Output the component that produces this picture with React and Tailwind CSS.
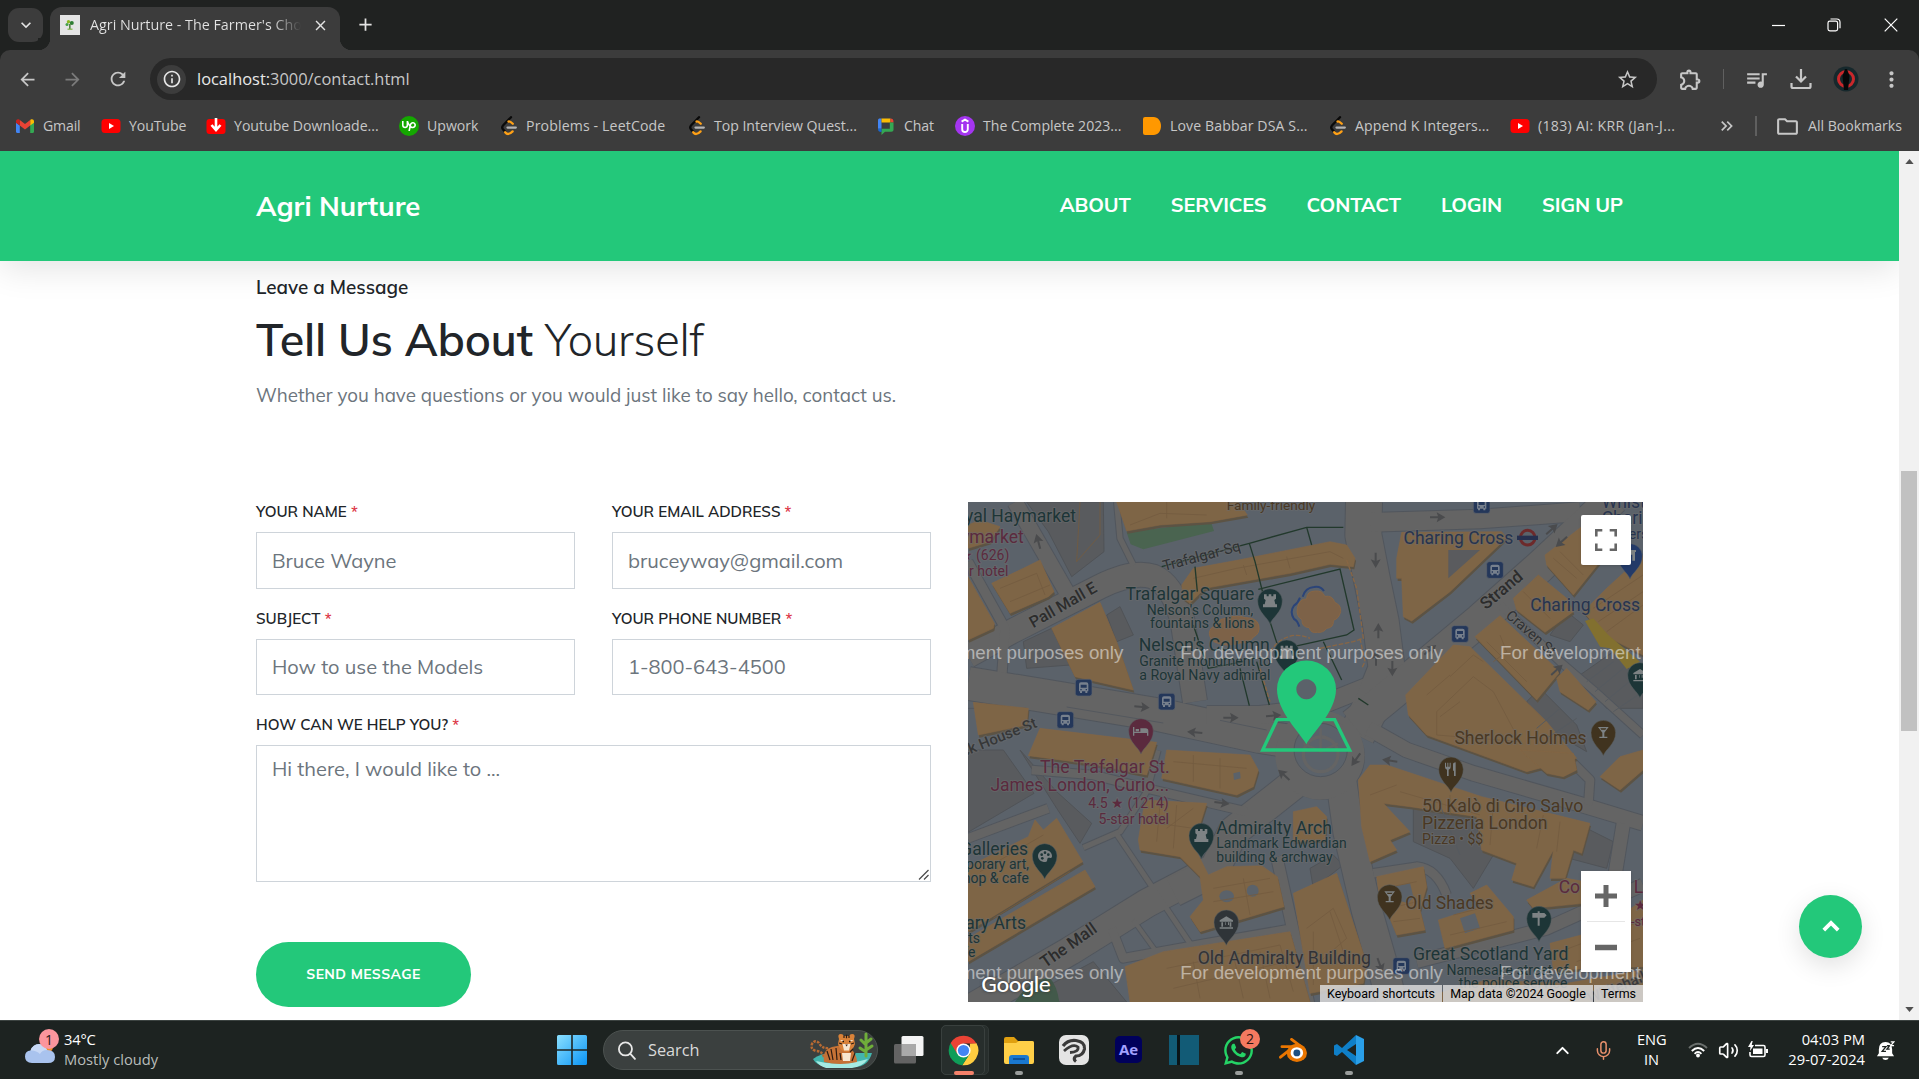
import React from 'react';
import {
  MdArrowBack, MdArrowForward, MdRefresh, MdStarBorder, MdOutlineExtension, MdQueueMusic,
  MdMoreVert, MdClose, MdAdd, MdOutlineFolder, MdKeyboardArrowDown,
  MdKeyboardDoubleArrowRight, MdInfoOutline,
} from 'react-icons/md';
import { SiUpwork } from 'react-icons/si';
import { FaWhatsapp } from 'react-icons/fa';
import { ChevronUp, Mic, Volume2 } from 'lucide-react';

const ui = "font-['Open_Sans','Noto_Sans',sans-serif]";
const site = "font-['Mulish','Open_Sans',sans-serif]";

/* ---------- bookmark icons ---------- */
const GmailIcon = () => (
  <svg viewBox="0 0 20 20" className="size-5">
    <path d="M1 5.5v10.2c0 .7.5 1.2 1.2 1.2h2.6V9.6L1 6.8z" fill="#4285f4" />
    <path d="M15.2 16.900h2.600c.7 0 1.200-.5 1.200-1.200V5.500l-3.800 3z" fill="#34a853" />
    <path d="M15.200 4v5.600L19 6.800V5.200c0-1.900-2-2.600-3.200-1.600z" fill="#fbbc04" />
    <path d="M4.800 9.600V4L10 8l5.200-4v5.600L10 13.600z" fill="#ea4335" />
    <path d="M1 5.200v1.600l3.800 2.800V4l-.6-.4C2.900 2.700 1 3.300 1 5.200z" fill="#c5221f" />
  </svg>
);
const YoutubeIcon = () => (
  <svg viewBox="0 0 20 20" className="size-5">
    <rect x="0.500" y="3" width="19" height="14" rx="3.500" fill="#f00" />
    <path d="M8 7v6l5-3z" fill="#fff" />
  </svg>
);
const DownloaderIcon = () => (
  <svg viewBox="0 0 20 20" className="size-5">
    <rect x="0.500" y="3" width="19" height="15" rx="3" fill="#f00" />
    <path d="M10 2v11M5.500 9l4.500 5 4.500-5" fill="none" stroke="#fff" strokeWidth="2.600" />
  </svg>
);
const UpworkIcon = () => (
  <span className="flex size-5 items-center justify-center rounded-full bg-[#14a800] text-white">
    <SiUpwork size={14} />
  </span>
);
const LeetIcon = () => (
  <svg viewBox="0 0 20 20" className="size-5" fill="none" strokeWidth="2.300" strokeLinecap="round">
    <path d="M13 1.200 5.200 9.300c-1.200 1.300-1.200 3 0 4.300l2 2.200" stroke="#0a0a0a" />
    <path d="M10.500 5.500c1-.6 2 0 4.300 2.300" stroke="#ffa116" />
    <path d="M7.200 16.200c1.800 2.400 4 2.600 7.400-.8" stroke="#ffa116" />
    <path d="M9.500 11.600h8.300" stroke="#b3b3b3" />
  </svg>
);
const ChatIcon = () => (
  <svg viewBox="0 0 20 20" className="size-5">
    <path d="M2 4.500C2 3.100 2.700 2.500 4 2.500h1.500v10.200H2z" fill="#4285f4" />
    <path d="M5.500 2.500h9v4h-9z" fill="#fbbc04" />
    <path d="M14.500 2.500c2 0 3 .8 3 4h-3z" fill="#ea4335" />
    <path d="M17.500 6.500v7c0 1.500-.8 2.200-2.200 2.200H9L5.500 19v-6.300h8.300V6.500z" fill="#34a853" />
    <path d="M2 12.700h3.500V16C3 16 2 15 2 12.700z" fill="#1967d2" />
  </svg>
);
const UdemyIcon = () => (
  <svg viewBox="0 0 20 20" className="size-5">
    <circle cx="10" cy="10" r="10" fill="#a435f0" />
    <path d="M6.600 5.600 10 3.700l3.400 1.900M7.200 8v5.200c0 3.800 5.600 3.800 5.600 0V8" fill="none" stroke="#fff" strokeWidth="1.900" />
  </svg>
);
const TileIcon = () => (
  <svg viewBox="0 0 20 20" className="size-5">
    <path d="M3 1h8.500C16 1 19 5 19 10s-3 9-7.500 9H3a2 2 0 0 1-2-2V3a2 2 0 0 1 2-2z" fill="#ff9800" />
  </svg>
);

const bookmarks = [
  { icon: GmailIcon, label: 'Gmail', w: 'w-[86px]', t: 'tracking-[-0.150px]' },
  { icon: YoutubeIcon, label: 'YouTube', w: 'w-[105px]', t: 'tracking-[-0.100px]' },
  { icon: DownloaderIcon, label: 'Youtube Downloade...', w: 'w-[193px]', t: 'tracking-normal' },
  { icon: UpworkIcon, label: 'Upwork', w: 'w-[99px]', t: 'tracking-normal' },
  { icon: LeetIcon, label: 'Problems - LeetCode', w: 'w-[188px]', t: 'tracking-[0.150px]' },
  { icon: LeetIcon, label: 'Top Interview Quest...', w: 'w-[190px]', t: 'tracking-[-0.020px]' },
  { icon: ChatIcon, label: 'Chat', w: 'w-[79px]', t: 'tracking-[-0.100px]' },
  { icon: UdemyIcon, label: 'The Complete 2023...', w: 'w-[187px]', t: 'tracking-normal' },
  { icon: TileIcon, label: 'Love Babbar DSA S...', w: 'w-[185px]', t: 'tracking-[0.120px]' },
  { icon: LeetIcon, label: 'Append K Integers...', w: 'w-[183px]', t: 'tracking-[0.120px]' },
  { icon: YoutubeIcon, label: '(183) AI: KRR (Jan-J...', w: 'w-[205px]', t: 'tracking-[0.320px]' },
];

function TabStrip() {
  return (
    <div className="flex h-[50px] shrink-0 items-end bg-[#202221] pl-2 text-[#e3e3e3]">
      <div className="mb-2 flex h-[34px] w-[35px] items-center justify-center rounded-[11px] bg-[#3c3c3c]">
        <MdKeyboardArrowDown size={20} />
      </div>
      <div className="relative ml-[7px] flex h-[43px] w-[290px] items-center rounded-t-[12px] bg-[#3c3c3c] pl-[10px] pr-[10px] pb-[7px]">
        <span className="absolute -left-3 bottom-0 size-3 bg-[radial-gradient(circle_at_0_0,#202221_12px,#3c3c3c_12.500px)]" />
        <span className="absolute -right-3 bottom-0 size-3 bg-[radial-gradient(circle_at_100%_0,#202221_12px,#3c3c3c_12.500px)]" />
        <svg viewBox="0 0 20 20" className="size-5 shrink-0">
          <rect width="20" height="20" fill="#e4e4e4" />
          <circle cx="8.500" cy="6.800" r="1.700" fill="#8bb81f" />
          <circle cx="11.800" cy="8" r="2" fill="#2e7d32" />
          <circle cx="7" cy="9.500" r="1.500" fill="#43a047" />
          <path d="M9.200 9h1.300v5H9.200z" fill="#33691e" />
          <path d="M7.500 14.200h5" stroke="#7cb342" strokeWidth="1.200" />
        </svg>
        <span className="ml-[10px] w-[211px] overflow-hidden whitespace-nowrap bg-[linear-gradient(90deg,#e3e3e3_86%,#3c3c3c_100%)] bg-clip-text text-[14.300px] leading-6 text-transparent">
          Agri Nurture - The Farmer's Choice
        </span>
        <MdClose size={17} className="ml-[11px] shrink-0" />
      </div>
      <div className="mb-[15px] ml-[15px]"><MdAdd size={21} /></div>
      <div className="ml-auto flex h-full items-center text-white">
        <svg viewBox="0 0 13 13" className="mr-[42px] size-[13px]"><path d="M0 6.500h13" stroke="#fff" strokeWidth="1.200" /></svg>
        <svg viewBox="0 0 14 14" className="mr-[43px] size-[14px]" fill="none" stroke="#fff" strokeWidth="1.200">
          <rect x="1" y="3.200" width="9.600" height="9.600" rx="1.800" />
          <path d="M3.500 1h6.300c1.900 0 3.200 1.300 3.200 3.200v6" />
        </svg>
        <svg viewBox="0 0 14 14" className="mr-[21px] size-[14px]"><path d="m.7.7 12.600 12.600M13.300.7.7 13.300" stroke="#fff" strokeWidth="1.200" /></svg>
      </div>
    </div>
  );
}

function Toolbar() {
  return (
    <div className="flex h-[58px] shrink-0 items-center bg-[#202221]">
      <div className="flex h-full w-full items-center rounded-t-[10px] bg-[#3c3c3c] text-[#c7c7c7]">
        <MdArrowBack size={21} className="ml-[17px]" />
        <MdArrowForward size={21} className="ml-[24px] text-[#7b7b7b]" />
        <MdRefresh size={22} className="ml-[24px]" />
        <div className="ml-[21px] flex h-[42px] w-[1507px] items-center rounded-full bg-[#282828] pl-[7px] pr-[18px]">
          <span className="flex size-[29px] items-center justify-center rounded-full bg-[#3c3c3c] text-[#e6e6e6]">
            <MdInfoOutline size={20} />
          </span>
          <span className="ml-[11px] text-[16.420px] text-[#c7c7c7]">
            <span className="text-[#e8e8e8]">localhost:</span>3000/contact.html
          </span>
          <MdStarBorder size={23} className="ml-auto" />
        </div>
        <MdOutlineExtension size={25} className="ml-[21px]" />
        <span className="ml-[20px] h-5 w-px bg-[#606060]" />
        <MdQueueMusic size={25} className="ml-[20px]" />
        <svg viewBox="0 0 22 22" className="ml-[21px] size-[22px]" fill="none" stroke="#c7c7c7" strokeWidth="2.200">
          <path d="M11 1v12M6 8.500l5 5 5-5M1.500 15v3.500c0 .9.600 1.500 1.500 1.500h16c.9 0 1.500-.6 1.500-1.500V15" />
        </svg>
        <svg viewBox="0 0 26 26" className="ml-[21px] size-[26px]">
          <circle cx="13" cy="13" r="12.500" fill="#16282c" />
          <circle cx="13" cy="13" r="7.500" fill="none" stroke="#c9282b" strokeWidth="3" />
          <path d="M12 3h2l2.500 7-1.500 14h-4L9.500 10z" fill="#050708" />
        </svg>
        <MdMoreVert size={25} className="ml-[20px]" />
      </div>
    </div>
  );
}

function BookmarkBar() {
  return (
    <div className="flex h-[43px] shrink-0 items-center bg-[#3c3c3c] pb-[7px] pl-[15px] text-[14.100px] text-[#c7c7c7]">
      {bookmarks.map(({ icon: Icon, label, w, t }) => (
        <div key={label} className={'flex shrink-0 items-center gap-2 whitespace-nowrap ' + w}>
          <Icon />
          <span className={t}>{label}</span>
        </div>
      ))}
      <MdKeyboardDoubleArrowRight size={20} className="ml-[2px]" />
      <span className="ml-[18px] h-5 w-[2px] bg-[#5f5f5f]" />
      <MdOutlineFolder size={25} className="ml-[18px]" />
      <span className="ml-[8px] whitespace-nowrap">All Bookmarks</span>
    </div>
  );
}

/* ---------- map ---------- */
const pedestrian = '#5b626a';
const road = '#646464';
const roadEdge = '#51565d';
const building = '#7e6546';
const buildingEdge = '#866744';

const roads = [
  { d: 'M24 1545L330 1368L560 1225L760 1120', w: 84 },
  { d: 'M640 1190L760 1130L820 1010L960 900L1010 860', w: 90 },
  { d: 'M24 482L150 412L420 275Q520 225 580 245Q640 270 668 380L705 620', w: 72 },
  { d: 'M165 21L325 300', w: 46 },
  { d: 'M24 200L135 400L125 550', w: 28 },
  { d: 'M24 565L300 610L600 660L900 725L1000 740', w: 98 },
  { d: 'M740 660L900 660L1060 640L1260 560', w: 54 },
  { d: 'M1212 21L1210 120L1235 250L1262 380L1280 520L1240 620L1190 720', w: 108 },
  { d: 'M1230 82L1560 72L1860 50', w: 56 },
  { d: 'M1180 690L1290 600L1560 375L1740 215L1960 10', w: 96 },
  { d: 'M1225 700L1340 765L1540 835L1850 925L2049 985', w: 44 },
  { d: 'M1140 830L1165 1010L1220 1245L1270 1420L1300 1545', w: 90 },
  { d: 'M470 21L480 130L520 210', w: 16 },
  { d: 'M590 765L560 880', w: 24 },
  { d: 'M215 825L400 840L560 880L860 950', w: 26 },
  { d: 'M24 1030L265 940', w: 26 },
  { d: 'M370 1058L480 1010L560 890', w: 16 },
  { d: 'M465 1010L690 1345', w: 15 },
  { d: 'M520 1275L585 1365', w: 12 },
  { d: 'M455 1300L490 1390L740 1345L1000 1300', w: 26 },
  { d: 'M950 1085L1000 1310L1050 1545', w: 34 },
  { d: 'M1620 330L1800 500L1900 585L2049 720', w: 22 },
  { d: 'M1240 1135L1370 1115Q1430 1120 1460 1200', w: 26 },
  { d: 'M1800 765L1890 855L1885 930', w: 26 },
  { d: 'M1990 985L1965 1140', w: 40 },
  { d: 'M1370 1400L1760 1300L2049 1170', w: 38 },
];

const greyBuildings = [
  '200,21 430,21 432,170 335,245 265,110',
  '24,765 130,765 222,895 24,1012',
  '180,765 290,890 395,985 360,1045 290,940',
  '190,440 275,400 330,510 200,520',
  '440,360 480,335 520,420 470,440',
  '1770,420 1820,350 1870,390 1830,440',
  '1860,540 1960,470 2049,570 2049,640 1940,640',
  '1700,620 1740,580 1850,690 1880,770 1760,700',
  '1360,925 1520,950 1600,1080 1540,1180 1470,1090 1360,1040',
  '1790,1080 1880,1000 1960,1040 1940,1120',
  '1050,1120 1120,1080 1150,1110 1060,1180',
  '250,1480 400,1400 500,1521 300,1521',
];

const buildings = [
  '24,245 103,385 100,400 24,435',
  '95,265 190,220 240,195 282,290 265,305 150,355',
  '24,90 60,75 120,95 90,140 24,160',
  '275,400 420,322 470,440 520,585 345,545',
  '470,21 835,21 862,60 750,80 600,90 500,108',
  '665,270 700,220 835,195 1110,140 1160,150 1185,190 1180,215 1110,208 990,235 735,280 690,325 670,310',
  '40,622 205,640 200,690 55,720',
  '240,700 590,742 560,840 400,808 205,782',
  '1310,190 1325,112 1625,110 1640,128 1470,290 1355,378 1330,365 1325,250 1310,250',
  '1337,600 1480,450 1530,455 1760,680 1850,790 1700,830 1400,720 1345,660',
  '1660,310 1735,240 1820,310 1840,350 1755,412 1670,345',
  '1755,180 1865,95 1920,200 1840,300 1760,210',
  '1545,425 1620,362 1660,400 1800,530 1730,615',
  '1790,550 1820,520 1908,620 1885,645 1800,590',
  '1870,350 1940,280 2049,180 2049,480 1930,420',
  '1195,855 1230,810 1280,810 1565,905 1890,985 1865,1075 1840,1065 1815,1150 1770,1150 1780,1065 1720,1175 1655,1155 1670,1105 1565,1065 1550,965 1350,935 1270,925 1350,1010 1290,1035 1310,1065 1230,1100 1205,995',
  '1250,1145 1390,1115 1400,1175 1380,1245 1395,1305 1310,1320 1255,1185',
  '1435,1275 1560,1235 1530,1195 1580,1170 1660,1265 1660,1305 1455,1360',
  '1700,1215 1820,1150 1900,1165 1870,1225 1720,1240',
  '1770,1345 1920,1305 2049,1215 2049,1415 1780,1425',
  '1000,1195 1130,1135 1220,1405 1210,1465 1050,1495',
  '1920,845 1980,785 2049,765 2049,825 1980,885',
  '1680,765 1840,775 1850,825 1810,845 1760,835',
  '1340,1521 1580,1455 1820,1465 2049,1425 2049,1521',
  '24,1115 205,1025 225,975 250,1005 290,970 368,1100 24,1310',
  '24,1330 375,1125 405,1175 24,1400',
  '620,765 870,780 895,825 880,875 830,900 605,850',
  '555,915 740,925 712,1015 705,1060 745,1140 800,1115 905,1112 952,1145 972,1235 720,1310 690,1265 730,1215 720,1145 660,1085 540,1065 535,1035',
  '495,1415 610,1370 990,1310 1050,1521 510,1521',
  '1000,950 1070,935 1100,965 1095,1035 1000,1040',
];

const details = [
  'M360 21L350 200L420 120V21', 'M510 90L600 55L740 60M620 21V70', 'M120 280L230 235L255 300M150 320L270 270',
  'M1430 650L1540 545L1600 590L1680 740L1430 720ZM1440 665L1500 620', 'M1470 545L1540 480L1570 500M1400 600L1470 540',
  'M1580 440L1700 560M1620 420L1640 470L1600 500', 'M1780 190L1850 250M1800 170L1870 240M1690 290L1770 370',
  'M1900 340L2049 240M1915 380L2049 290M1940 410L2049 330', 'M1230 900L1310 870M1320 890L1560 960M1470 900V960M1600 930L1590 1050M1750 960L1730 1060M1800 980L1790 1070',
  'M1040 1300L1120 1240L1160 1330L1080 1400M1110 1250L1150 1370M1060 1310V1470', 'M620 1420L960 1350L1000 1490M640 1480L980 1400M700 1400L720 1510M820 1380L850 1510M900 1370L930 1510',
  'M640 800L860 820M700 780V860M780 790V880', 'M600 930L590 1040M650 930L640 1060M700 940L620 1000M560 980L700 1000M760 1220L940 1190M850 1150L870 1260M760 1180L930 1150',
  'M60 1130L250 1020M100 1270L330 1130', 'M1270 1180L1370 1160M1290 1240L1370 1220M1300 1280L1380 1270', 'M1480 1260L1600 1230M1470 1320L1640 1280', 'M1800 1370L2040 1280M1850 1400L2040 1330',
  'M700 250L830 220L1110 170L1150 190M850 210L860 240M980 185L990 220',
];

const busStops = [[371, 578], [620, 620], [316, 675], [1565, 30], [1605, 225], [1500, 417], [1324, 1413]];

const arrows = [
  [235, 140, -105], [545, 636, 5], [812, 668, 0], [940, 662, -5], [705, 712, 185], [1432, 67, 0], [1775, 103, -42], [1805, 140, 138],
  [1247, 195, 90], [1255, 408, -90], [1297, 520, 90], [1248, 490, -90], [1410, 465, -38], [1790, 525, -42], [972, 840, -138],
  [785, 924, 8], [1188, 793, 125], [1290, 797, 188], [1260, 1410, 70],
];

function Pin({ x, y, fill, children }) {
  return (
    <g transform={`translate(${x} ${y})`}>
      <path d="M0 69C-6 50-37 34-37 0A37 37 0 0 1 37 0C37 34 6 50 0 69Z" fill={fill} stroke="#5d6264" strokeWidth="1.500" />
      <g fill="#7d8284" stroke="none">{children}</g>
    </g>
  );
}

const Rook = () => <path d="M-18-20h8v6h6v-6h8v6h6v-6h8v13l-5 4 3 13h5v9h-42v-9h5l3-13-5-4z" />;
const Glass = () => <path d="M-16-17h32L3 0v12h9v4h-24v-4h9V0zM-9-13l3 4h12l3-4z" fillRule="evenodd" />;
const Museum = () => <path d="M-20-6 0-18l20 12v4h-40zM-15 0h5v13h-5zM-3 0h2v8h-2zM5 0h3v8H5zM10 0h5v13h-5zM-20 15h40v4h-40z" />;

function Label({ x, y, size = 52.5, fill, anchor = 'start', weight = 400, rotate = 0, children }) {
  return (
    <text
      transform={`translate(${x} ${y}) rotate(${rotate})`}
      fontSize={size}
      fontWeight={weight}
      textAnchor={anchor}
      fill={fill}
      stroke="#6b6c6d"
      strokeOpacity="0.550"
      strokeWidth="6"
      strokeLinejoin="round"
      paintOrder="stroke"
    >
      {children}
    </text>
  );
}

const teal = '#1d3537';
const wine = '#5b2a3e';
const brown = '#4a3823';
const navy = '#27344f';

function MapDrawing() {
  return (
    <svg viewBox="24 21 2025 1500" className="block h-[500px] w-[675px] font-['Roboto',sans-serif]">
      <rect x="24" y="21" width="2025" height="1500" fill={pedestrian} />
      {greyBuildings.map((p) => <polygon key={p} points={p} fill="#595b5e" stroke="#505357" strokeWidth="3" />)}
      <g fill="none" strokeLinejoin="round">
        {roads.map((r) => <path key={r.d} d={r.d} stroke={roadEdge} strokeWidth={r.w + 6} />)}
        <circle cx="1085" cy="785" r="130" fill={roadEdge} />
        {roads.map((r) => <path key={r.d} d={r.d} stroke={road} strokeWidth={r.w} />)}
      </g>
      <circle cx="1080" cy="780" r="134" fill={road} />
      <path d="M960 700Q1040 640 1150 690L1130 720L960 740Z" fill={road} />
      <circle cx="1082" cy="765" r="80" fill={pedestrian} stroke={roadEdge} strokeWidth="3" />
      <circle cx="1082" cy="778" r="52" fill="none" stroke={road} strokeWidth="10" />
      <path d="M1082 700V770M1030 745L1082 770L1134 745" stroke={road} strokeWidth="7" fill="none" />
      <path d="M320 636L610 684M780 676L920 705M24 640L200 640" stroke={roadEdge} strokeWidth="2.500" fill="none" />

      <polygon points="500,112 635,95 660,84 752,78 762,108 550,163 512,148" fill="#4a6450" />
      <path d="M165 1521Q210 1450 270 1450Q290 1470 298 1521Z" fill="#42594a" />
      <g>
        {buildings.map((p) => <polygon key={p + 's'} points={p} fill="#5c5344" transform="translate(3 8)" />)}
        {buildings.map((p) => <polygon key={p} points={p} fill={building} stroke={buildingEdge} strokeWidth="1.500" />)}
      </g>
      <polygon points="1465,165 1560,165 1465,250" fill="#5a5b5e" />
      <polygon points="1500,1270 1545,1255 1560,1300 1515,1315" fill={pedestrian} />
      <polygon points="1300,1175 1350,1165 1360,1205 1345,1225 1310,1215" fill={pedestrian} />
      <ellipse cx="800" cy="1204" rx="22" ry="18" fill={pedestrian} />
      <ellipse cx="878" cy="1187" rx="18" ry="18" fill={pedestrian} />
      <polygon points="820,835 840,830 842,850 822,855" fill={pedestrian} />
      <polygon points="1875,378 1900,370 1945,420 2040,500 2000,522 1950,460 1920,455" fill="#82702f" />
      <g fill="none" stroke="#735c40" strokeWidth="2.500">{details.map((d) => <path key={d} d={d} />)}</g>
      <g fill="none" stroke="#555a60" strokeWidth="3">
        <path d="M1880 560L1960 500M1905 590L1990 520M1935 620L2020 550M1960 650L2049 590M1730 700L1800 640M1760 730L1850 670M1440 930L1500 1080" />
      </g>

      <g fill="none" stroke="#22392c" strokeWidth="4">
        <path d="M605 215L868 145L1040 97L1150 97M868 145L885 200L900 260L930 380L975 520M895 283L1140 222L1182 405L1160 420L1000 455" />
        <path d="M705 215L712 290M700 390L720 450L745 520L850 500M840 520L868 632M890 500L928 630M1090 440L1145 555M1040 97L1055 150M1195 610L1225 630" />
      </g>
      <g fill="#7d6248">
        <path d="M1012 340Q1018 310 1040 312Q1040 288 1066 288Q1088 286 1094 304Q1118 300 1124 322Q1144 330 1142 350Q1136 372 1120 376Q1122 398 1100 400Q1090 414 1072 412Q1052 416 1048 398Q1024 396 1026 374Q1008 364 1012 340Z" stroke="#886645" strokeWidth="3" />
        <path d="M748 415Q750 396 766 394Q770 372 800 370Q830 358 856 368Q890 368 896 390Q902 416 880 426Q868 446 840 444Q800 456 772 444Q750 438 748 415Z" stroke="#886645" strokeWidth="3" />
      </g>
      <path d="M1028 305Q1036 278 1062 276Q1082 272 1092 288M1020 308Q1014 324 1002 332Q988 350 1002 372Q1012 376 1018 395" fill="none" stroke="#2b4478" strokeWidth="6" />
      <path d="M1160 195L1190 280L1210 430L1180 440L1080 460M1200 430L1215 500L1205 520M900 520L930 620M930 470Q980 400 1050 430" fill="none" stroke="#886645" strokeWidth="4" strokeDasharray="14 5" />

      <g fill="#4a4b4d">
        {arrows.map(([x, y, a]) => (
          <path key={`${x}-${y}`} transform={`translate(${x} ${y}) rotate(${a})`} d="M-22-3H2L-2-15 24 0-2 15 2 3H-22Z" />
        ))}
      </g>
      {busStops.map(([x, y]) => (
        <g key={`${x}-${y}`} transform={`translate(${x} ${y})`}>
          <rect x="-25" y="-25" width="50" height="50" rx="8" fill="#24375a" stroke="#5d646c" strokeWidth="2" />
          <path d="M-14-10q0-6 6-6H8q6 0 6 6V11h-3v5H5v-5H-5v5h-6v-5h-3zM-9-9V0H9v-9zM-10 4v4h4V4zM6 4v4h4V4z" fill="#77808d" fillRule="evenodd" />
        </g>
      ))}

      <Label x="348" y="80" anchor="end" fill={teal}>Royal Haymarket</Label>
      <Label x="191" y="143" anchor="end" fill={wine}>Haymarket</Label>
      <Label x="148" y="194" size={42} anchor="end" fill={wine}>4.4 ★ (626)</Label>
      <Label x="145" y="242" size={42} anchor="end" fill={wine}>4-star hotel</Label>
      <Label x="800" y="46" size={41} fill={brown}>Family-friendly</Label>
      <Label x="220" y="400" size={48} rotate={-30} weight={500} fill="#2c2c2c">Pall Mall E</Label>
      <Label x="613" y="228" size={44} rotate={-15} fill="#2f3133">Trafalgar-Sq</Label>
      <Label x="883" y="314" anchor="end" fill={teal}>Trafalgar Square</Label>
      <Label x="880" y="360" size={42} anchor="end" fill={teal}>Nelson's Column,</Label>
      <Label x="883" y="400" size={42} anchor="end" fill={teal}>fountains &amp; lions</Label>
      <Label x="929" y="468" size={53} anchor="end" fill={teal}>Nelson's Column</Label>
      <Label x="933" y="513" size={42} anchor="end" fill={teal}>Granite monument to</Label>
      <Label x="931" y="554" size={42.500} anchor="end" fill={teal}>a Royal Navy admiral</Label>
      <Label x="10" y="786" size={45} rotate={-22} weight={500} fill="#363738">ck House St</Label>
      <Label x="1660" y="146" anchor="end" fill={navy}>Charing Cross</Label>
      <Label x="1711" y="348" fill={navy}>Charing Cross</Label>
      <Label x="1925" y="39" fill={navy}>Whistle</Label>
      <Label x="1925" y="88" fill={navy}>Charing</Label>
      <Label x="1950" y="132" size={42} fill={navy}>Riverside</Label>
      <Label x="1578" y="346" size={51} rotate={-40} weight={500} fill="#2c2c2c">Strand</Label>
      <Label x="1635" y="365" size={43} rotate={41} fill="#2f3133">Craven St</Label>
      <Label x="1880" y="747" anchor="end" fill={brown}>Sherlock Holmes</Label>
      <Label x="629" y="834" size={53} anchor="end" fill={wine}>The Trafalgar St.</Label>
      <Label x="627" y="887" anchor="end" fill={wine}>James London, Curio...</Label>
      <Label x="626" y="939" size={42} anchor="end" fill={wine}>4.5 ★ (1214)</Label>
      <Label x="627" y="987" size={42} anchor="end" fill={wine}>5-star hotel</Label>
      <Label x="204" y="1079" anchor="end" fill={teal}>Galleries</Label>
      <Label x="207" y="1123" size={42} anchor="end" fill={teal}>Contemporary art,</Label>
      <Label x="207" y="1164" size={42} anchor="end" fill={teal}>shop &amp; cafe</Label>
      <Label x="198" y="1301" anchor="end" fill={teal}>Contemporary Arts</Label>
      <Label x="60" y="1345" size={42} anchor="end" fill={teal}>Arts</Label>
      <Label x="46" y="1386" size={42} anchor="end" fill={teal}>cafe</Label>
      <Label x="769" y="1016" size={53} fill={teal}>Admiralty Arch</Label>
      <Label x="769" y="1060" size={41.800} fill={teal}>Landmark Edwardian</Label>
      <Label x="769" y="1101" size={41.800} fill={teal}>building &amp; archway</Label>
      <Label x="256" y="1420" size={50} rotate={-35} weight={500} fill="#2c2c2c">The Mall</Label>
      <Label x="713" y="1407" size={53} fill="#313236">Old Admiralty Building</Label>
      <Label x="1386" y="950" size={53} fill={brown}>50 Kalò di Ciro Salvo</Label>
      <Label x="1386" y="1003" size={53} fill={brown}>Pizzeria London</Label>
      <Label x="1386" y="1047" size={42} fill={brown}>Pizza • $$</Label>
      <Label x="1336" y="1243" fill={brown}>Old Shades</Label>
      <Label x="1796" y="1194" fill={wine}>Co</Label>
      <Label x="2021" y="1194" fill={wine}>Lo</Label>
      <Label x="2022" y="1246" size={42} fill={wine}>★</Label>
      <Label x="2013" y="1294" size={38} fill={wine}>-star</Label>
      <Label x="1359" y="1396" size={52.800} fill={teal}>Great Scotland Yard</Label>
      <Label x="1826" y="1439" size={42} anchor="end" fill={teal}>Namesake street of</Label>
      <Label x="1822" y="1480" size={42} anchor="end" fill={teal}>the police service</Label>
      <Label x="1890" y="1525" size={44} rotate={-22} weight={500} fill="#3a3a3c">Whitehall Pl</Label>

      <circle cx="1703" cy="128" r="22" fill="none" stroke="#6d2a2b" strokeWidth="9" />
      <rect x="1671" y="122" width="63" height="13" fill="#26304f" />

      <Pin x={930} y={318} fill={teal}><Rook /></Pin>
      <Pin x={980} y={472} fill={teal}><Rook /></Pin>
      <Pin x={724} y={1022} fill={teal}><Rook /></Pin>
      <Pin x={543} y={708} fill={wine}><path d="M-24-12h4V2H-2v-10h16q8 0 8 8v14h-4V6h-38v8h-4zM-16-6h10v7h-10z" /></Pin>
      <Pin x={254} y={1083} fill={teal}>
        <path d="M0-18C14-18 22-10 22 0S14 4 10 6s0 12-8 12C-12 18-20 10-20 0S-12-18 0-18Z" />
        <g fill={teal}><circle cx="-9" cy="-4" r="4" /><circle cx="1" cy="-10" r="4" /><circle cx="11" cy="-4" r="4" /><circle cx="-7" cy="7" r="4" /></g>
      </Pin>
      <Pin x={799} y={1282} fill="#2f3438"><Museum /></Pin>
      <Pin x={1930} y={713} fill="#40331f"><Glass /></Pin>
      <Pin x={1473} y={823} fill="#40331f">
        <path d="M-18-20h3v12h4v-12h3v12h4v-12h3V-6q0 6-6 7v19h-5V1q-6-1-6-7zM6 20v-34q0-7 8-7v41h-5V4H6z" />
      </Pin>
      <Pin x={1289} y={1206} fill="#40331f"><Glass /></Pin>
      <Pin x={1737} y={1271} fill={teal}><path d="M-4-22h6v5h14l7 7-7 7H2v24h-6V-3h-16v-14h16z" /></Pin>
      <Pin x={2040} y={540} fill={teal}><Museum /></Pin>
      <Pin x={2010} y={183} fill="#233a68"><path d="M-18-18h36v6h-3v26h-8V-4h-14v18h-8v-26h-3z" /></Pin>

      <g fill="#fff" fillOpacity="0.500" fontSize="56.300" className="font-['Liberation_Sans',Arial,sans-serif]">
        {[491, 1452].map((y) => [-298, 661, 1620].map((x) => (
          <text key={`${x}-${y}`} x={x} y={y}>For development purposes only</text>
        )))}
      </g>

      <path d="M1008 674H951L908 765H1169L1124 674H1074" fill="none" stroke="#23c87a" strokeWidth="10" />
      <path fillRule="evenodd" d="M1039 748C1022 716 951 650 951 583A88 86 0 0 1 1128 583C1128 650 1056 716 1039 748ZM1039 553a30 30 0 1 0 .1 0Z" fill="#23c87a" />
    </svg>
  );
}

function MapPanel() {
  return (
    <div className="relative h-[500px] w-[675px] overflow-hidden">
      <MapDrawing />
      <button className="absolute left-[613px] top-[13px] flex size-[50px] items-center justify-center rounded-[2px] bg-white shadow">
        <svg viewBox="0 0 22 22" className="size-[22px]" fill="none" stroke="#666" strokeWidth="2.600">
          <path d="M1.300 7.500V1.300h6M14.700 1.300h6v6.200M20.700 14.500v6.200h-6M7.300 20.700h-6v-6.200" />
        </svg>
      </button>
      <div className="absolute left-[613px] top-[369px] flex h-[101px] w-[50px] flex-col items-center justify-between bg-white shadow">
        <svg viewBox="0 0 50 50" className="size-[50px]"><path d="M14 25h22M25 14v22" stroke="#666" strokeWidth="5" /></svg>
        <span className="h-px w-[38px] bg-[#e6e6e6]" />
        <svg viewBox="0 0 50 50" className="size-[50px]"><path d="M14 25.500h22" stroke="#666" strokeWidth="5.500" /></svg>
      </div>
      <span className="absolute left-[13px] top-[468px] font-['Mulish',sans-serif] text-[22px] font-semibold leading-7 tracking-[-0.600px] text-white [text-shadow:0_0_3px_#333]">Google</span>
      <div className="absolute bottom-0 right-0 flex h-[17px] w-[323px] gap-px font-['Roboto',sans-serif] text-[12.450px] leading-[17px] text-black">
        <span className="w-[122px] whitespace-nowrap bg-[#d9d9d9]/85 text-center">Keyboard shortcuts</span>
        <span className="w-[150px] whitespace-nowrap bg-[#d9d9d9]/85 text-center">Map data ©2024 Google</span>
        <span className="flex-1 bg-[#d9d9d9]/85 text-center">Terms</span>
      </div>
    </div>
  );
}

/* ---------- contact page ---------- */
function Field({ label, placeholder, tall }) {
  return (
    <label className="block">
      <span className="block h-[19px] text-[15.150px] font-semibold leading-[19px] text-[#212529]">
        {label} <span className="text-[#dc3545]">*</span>
      </span>
      <input
        placeholder={placeholder}
        className={
          'mt-[11px] block w-full border border-[#ced4da] px-[15px] text-[20px] placeholder:text-[#6c757d] placeholder:opacity-100 ' +
          (tall ? 'h-[57px]' : 'h-[56px] pb-[2px]')
        }
      />
    </label>
  );
}

function ContactPage() {
  return (
    <main className={'flex h-[869px] shrink-0 bg-white ' + site}>
      <div className="relative flex-1 overflow-hidden">
        <header className="relative z-10 flex h-[110px] items-center justify-between bg-[#23c87a] pl-[256px] pr-[276px] text-white shadow-[0_8px_32px_rgba(0,0,0,0.110)]">
          <span className="text-[27.500px] font-bold">Agri Nurture</span>
          <nav className="flex gap-10 pb-[2px] text-[20px] font-bold tracking-[-0.150px]">
            <a>ABOUT</a><a>SERVICES</a><a>CONTACT</a><a>LOGIN</a><a>SIGN UP</a>
          </nav>
        </header>
        <section className="pl-[256px] pt-[14px]">
          <p className="h-6 text-[18.850px] font-semibold leading-6 text-[#212529]">Leave a Message</p>
          <h1 className="mt-[12px] h-[57px] text-[45px] font-semibold leading-[56px] tracking-[-0.260px] text-[#212529]">
            Tell Us About <span className="font-light">Yourself</span>
          </h1>
          <p className="mt-[13px] h-7 text-[18.750px] leading-7 text-[#6c757d]">
            Whether you have questions or you would just like to say hello, contact us.
          </p>
          <div className="mt-[93px] flex gap-[37px]">
            <form className="w-[675px]">
              <div className="grid grid-cols-2 gap-x-[37px] gap-y-5">
                <Field label="YOUR NAME" placeholder="Bruce Wayne" tall />
                <Field label="YOUR EMAIL ADDRESS" placeholder="bruceyway@gmail.com" tall />
                <Field label="SUBJECT" placeholder="How to use the Models" />
                <Field label="YOUR PHONE NUMBER" placeholder="1-800-643-4500" />
              </div>
              <label className="mt-5 block">
                <span className="block h-[19px] text-[15.150px] font-semibold leading-[19px] text-[#212529]">
                  HOW CAN WE HELP YOU? <span className="text-[#dc3545]">*</span>
                </span>
                <span className="relative mt-[11px] block">
                  <textarea
                    placeholder="Hi there, I would like to ..."
                    className="block h-[137px] w-full resize-none border border-[#ced4da] px-[15px] py-2 text-[20px] leading-[30px] placeholder:text-[#6c757d] placeholder:opacity-100"
                  />
                  <svg viewBox="0 0 11 11" className="absolute bottom-[2px] right-[2px] size-[11px]"><path d="M1 10.500 10.500 1M6 10.500 10.500 6" stroke="#4d4d4d" strokeWidth="1.300" /></svg>
                </span>
              </label>
              <button type="button" className="mt-[60px] flex h-[65px] w-[215px] items-center justify-center rounded-full bg-[#23c87a] text-[14px] font-bold tracking-[0.400px] text-white">
                SEND MESSAGE
              </button>
            </form>
            <MapPanel />
          </div>
        </section>
        <button className="absolute left-[1799px] top-[744px] flex size-[63px] items-center justify-center rounded-full bg-[#23c87a] shadow-[0_8px_26px_rgba(0,0,0,0.120)]">
          <svg viewBox="0 0 20 14" className="h-[13px] w-[18px]"><path d="m2 11 8-8 8 8" fill="none" stroke="#fff" strokeWidth="4.200" /></svg>
        </button>
      </div>
      <div className="flex w-5 flex-col items-center justify-between bg-[#f1f1f1] py-[8px]">
        <svg viewBox="0 0 10 6" className="h-[5px] w-[9px]"><path d="M0 6 5 0l5 6z" fill="#505050" /></svg>
        <span className="mb-[276px] mt-[307px] w-4 flex-1 bg-[#c1c1c1]" />
        <svg viewBox="0 0 10 6" className="h-[5px] w-[9px]"><path d="M0 0h10L5 6z" fill="#505050" /></svg>
      </div>
    </main>
  );
}

/* ---------- taskbar ---------- */
const TigerArt = () => (
  <svg viewBox="0 0 64 38" className="h-[38px] w-[64px]">
    <path d="M3 28Q10 22 24 22H62Q58 36 44 36H16Q6 34 3 28Z" fill="#43b5ad" />
    <path d="M6 30Q30 36 58 28Q52 36 42 37H16Q9 35 6 30Z" fill="#a5ebe3" />
    <path d="M14 26Q12 20 6 20Q0 18 2 13Q5 8 9 12Q12 18 19 17" fill="none" stroke="#b86a32" strokeWidth="2.400" strokeDasharray="2.500 1.200" />
    <path d="M14 31Q12 19 22 16L32 14Q46 17 47 31Q30 35 14 31Z" fill="#c57236" />
    <path d="M29 8q-2-5 2-5 2 0 3 2h5q1-2 3-2 4 0 2 5l1 5q-2 7-8.500 8Q30 20 28 13z" fill="#d98239" />
    <path d="M32.500 13h8l-1.500 6.500h-5zM30 10q2.500-2 4 .5M43.500 10q-2.500-2-4 .5M32 22h9l-1 8h-7z" fill="#f7e6cf" />
    <path d="M34 4.500v2.500M36.500 3.800v3.500M39 4.500v2.500M29 12l3 1M44 12l-3 1M17 20l3 9M21 18l2 11M26 17l1 12M45 22l-3 8M30 22l1 7M43 18l-3 3" stroke="#2b1b12" strokeWidth="1.200" />
    <path d="M32.500 10.500h1.500M39 10.500h1.500" stroke="#18100b" strokeWidth="1.300" />
    <path d="M35.300 13.500h2.600l-1.300 2z" fill="#3a2018" />
    <path d="M56 25V3M56 14l-5-5M56 12l5-4M56 19l6-4M56 21l-6-4" stroke="#6fae3a" strokeWidth="3" strokeLinecap="round" />
  </svg>
);

const ChromeLogo = () => (
  <svg viewBox="0 0 48 48" className="size-[31px]">
    <path d="M43.900 12.500A23 23 0 0 1 22 46.900L33.500 29.500 34 13z" fill="#ffcd40" />
    <path d="M4.100 12.500A23 23 0 0 0 22 46.900L33.500 29.500 24 24z" fill="#0f9d58" />
    <path d="M4.100 12.500 14.500 29.500 24 13H44A23 23 0 0 0 4.100 12.500z" fill="#ea4335" />
    <circle cx="24" cy="24" r="11" fill="#fff" />
    <circle cx="24" cy="24" r="8.700" fill="#4285f4" />
  </svg>
);

const TaskView = () => (
  <svg viewBox="0 0 30 30" className="size-[30px]">
    <rect x="7.500" y="1" width="22" height="20" rx="1.500" fill="#f4f4f4" />
    <rect x="0" y="9" width="22" height="19.500" rx="1.500" fill="#636363" />
    <rect x="7.500" y="9" width="14.500" height="12" fill="#a9a9a9" />
  </svg>
);
const Explorer = () => (
  <svg viewBox="0 0 30 30" className="size-[30px]">
    <path d="M0 4q0-2 2-2h8l4 4h14q2 0 2 2v6H0z" fill="#e0a010" />
    <path d="M0 8h12l3-2h13q2 0 2 2v19q0 2-2 2H2q-2 0-2-2z" fill="#ffcf48" />
    <path d="M5 29v-6q0-3 3-3h14q3 0 3 3v6z" fill="#1a78d0" />
    <path d="M9 24h12" stroke="#0b4a8f" strokeWidth="1.600" />
  </svg>
);
const ClipStudio = () => (
  <svg viewBox="0 0 30 30" className="size-[30px]">
    <rect width="30" height="30" rx="7" fill="#e4e4e4" />
    <path d="M4 11Q9 4.500 17 5.500Q26.500 7 25.500 14Q24 21 17 21Q13.500 24 17 26.500" fill="none" stroke="#3a3a3a" strokeWidth="3.200" />
    <path d="M5 16Q14 8 19 12Q20 17 11 17.500" fill="none" stroke="#3a3a3a" strokeWidth="2.800" />
  </svg>
);
const AfterEffects = () => (
  <span className="flex size-[27px] -translate-y-px items-center justify-center rounded-[5px] bg-[#00005b] text-[15px] font-bold text-[#a3a1ff]">Ae</span>
);
const SplitTile = () => (
  <span className="flex size-[30px] gap-[3px] bg-[#0a1418]">
    <span className="w-[8px] bg-[#125b76]" /><span className="flex-1 bg-[#125b76]" />
  </span>
);
const WhatsApp = () => (
  <span className="relative text-[#25d366]">
    <FaWhatsapp size={33} />
    <span className="absolute -top-[5px] left-[18px] flex size-5 items-center justify-center rounded-full bg-[#f47a60] text-[14px] text-[#2a1512]">2</span>
  </span>
);
const Blender = () => (
  <svg viewBox="0 0 30 26" className="h-[25px] w-[29px]">
    <path d="M13 1.500 23 9M3 9h16M1.500 20 14 10" stroke="#ea7600" strokeWidth="3" strokeLinecap="round" />
    <ellipse cx="18.500" cy="15.500" rx="10.500" ry="9.500" fill="#ea7600" />
    <ellipse cx="18.500" cy="15.500" rx="6.500" ry="6" fill="#fff" />
    <circle cx="18.500" cy="15.500" r="3.600" fill="#1c4f82" />
  </svg>
);
const VsCode = () => (
  <svg viewBox="0 0 30 30" className="size-[30px]">
    <path d="M22 0 8 13 3 9 0 10.500v9L3 21l5-4 14 13V21L13 15l9-6z" fill="#0f7fc8" />
    <path d="M22 0l8 4v22l-8 4z" fill="#2a9fe8" />
  </svg>
);
const WifiArcs = () => (
  <svg viewBox="0 0 20 16" className="ml-[22px] mr-[10px] h-[16px] w-[20px]" fill="none" strokeWidth="1.900">
    <path d="M1 6Q10-2.500 19 6" stroke="#6a6f6d" />
    <path d="M3.800 9Q10 3 16.200 9M6.600 11.800Q10 8.300 13.400 11.800" stroke="#fff" />
    <circle cx="10" cy="13.500" r="1.900" fill="#fff" />
  </svg>
);

const apps = [
  { name: 'taskview', icon: TaskView },
  { name: 'chrome', icon: ChromeLogo, active: true },
  { name: 'explorer', icon: Explorer, dot: true },
  { name: 'clip', icon: ClipStudio },
  { name: 'ae', icon: AfterEffects },
  { name: 'tile', icon: SplitTile },
  { name: 'whatsapp', icon: WhatsApp, dot: true },
  { name: 'blender', icon: Blender },
  { name: 'vscode', icon: VsCode, dot: true },
];

function Taskbar() {
  return (
    <footer className="flex h-[59px] shrink-0 items-center border-t border-[#3c4341] bg-[#1d2321] text-white">
      <div className="flex w-[557px] items-center gap-[9px] pl-[25px]">
        <span className="relative mt-[4px] block">
          <svg viewBox="0 0 30 26" className="h-[26px] w-[30px]">
            <circle cx="22" cy="8" r="6" fill="#f28c28" />
            <path d="M7 24q-7 0-7-6.500 0-5.500 5.500-6Q8 5 14 5q6 0 8 6 8 0 8 7 0 6-7 6z" fill="#a9c3ee" />
            <path d="M5.500 11.500Q8 5 14 5q6 0 8 6-5 0-7 4-4-4-9.500-3.500z" fill="#c8d9f6" />
          </svg>
          <span className="absolute -top-[10px] left-[14px] flex size-5 items-center justify-center rounded-full bg-[#fb959d] text-[14px] text-[#2b1719]">1</span>
        </span>
        <span className="flex flex-col pb-[2px] text-[14.700px] leading-5">
          <span className="tracking-[-0.200px]">34°C</span>
          <span className="text-[#b9bdbb]">Mostly cloudy</span>
        </span>
      </div>
      <svg viewBox="0 0 30 30" className="size-[30px]">
        <defs>
          <linearGradient id="winBlue" x1="0" y1="0" x2="1" y2="1">
            <stop offset="0" stopColor="#8be0ff" /><stop offset="1" stopColor="#0a94f5" />
          </linearGradient>
        </defs>
        <path d="M1.500 0h12.700v14.200H0V1.500Q0 0 1.500 0zM15.800 0h12.700Q30 0 30 1.500v12.700H15.800zM0 15.800h14.200V30H1.500Q0 30 0 28.500zM15.800 15.800H30v12.700Q30 30 28.500 30H15.800z" fill="url(#winBlue)" />
      </svg>
      <div className="ml-[16px] flex h-10 w-[275px] items-center rounded-full border border-[#4c5250] bg-[#3b403f] pl-[13px] pr-[3px]">
        <svg viewBox="0 0 18 18" className="size-[19px]" fill="none" stroke="#e8e8e8" strokeWidth="1.700" strokeLinecap="round"><circle cx="8" cy="7.500" r="6.200" /><path d="m12.500 12 4.500 5" /></svg>
        <span className="ml-[12px] text-[16.300px] text-[#dadada]">Search</span>
        <span className="ml-auto"><TigerArt /></span>
      </div>
      <div className="ml-[3px] flex h-full">
        {apps.map(({ name, icon: Icon, active, dot }) => (
          <div key={name} className="relative flex w-[55px] items-center justify-center">
            {active && <span className="absolute left-[5px] top-[4px] h-[50px] w-[48px] rounded-[5px] border border-[#313836] bg-[#272e2c]" />}
            {active && <span className="absolute left-[5px] top-[4px] h-[50px] w-[44px] rounded-[5px] border border-[#39403e]" />}
            <span className="relative">
              <Icon />
            </span>
            {active && <span className="absolute bottom-[4px] h-1 w-5 rounded-full bg-[#f4816a]" />}
            {dot && <span className="absolute bottom-[4px] h-1 w-2 rounded-full bg-[#9a9d9c]" />}
          </div>
        ))}
      </div>
      <div className="ml-auto flex h-full items-center">
        <ChevronUp size={21} strokeWidth={2.200} className="mr-[20px]" />
        <Mic size={21} strokeWidth={1.700} color="#e8906c" className="mr-[23px]" />
        <span className="w-[29px] pb-[2px] text-center text-[14.600px] leading-5">ENG<br />IN</span>
        <WifiArcs />
        <Volume2 size={21} strokeWidth={1.900} className="mr-[9px]" />
        <svg viewBox="0 0 20 18" className="mr-[19px] h-[18px] w-[20px]" fill="none" stroke="#fff" strokeWidth="1.600">
          <path d="M7 4.500h8.500q1.500 0 1.500 1.500v8q0 1.500-1.500 1.500h-12Q2 15.500 2 14v-3" />
          <path d="M5 7.500h9.500v5.500H5z" fill="#fff" stroke="none" />
          <path d="M3.500 0 0 6h2.500L2 10l4-6H3.700l1-4zM18 8h2v4h-2z" fill="#fff" stroke="none" />
        </svg>
        <span className="w-[78px] pb-[2px] text-right text-[14.700px] leading-5">04:03 PM<br />29-07-2024</span>
        <svg viewBox="0 0 20 20" className="ml-[11px] mr-[24px] size-[19px]">
          <path d="M10 1q7 0 7 8v4l2 3H1l2-3V9q0-8 7-8z" fill="#fff" />
          <path d="M6.500 17.500h7q-1 2.500-3.500 2.500t-3.500-2.500z" fill="#fff" />
          <path d="M6.500 6h4l-4 5h4M11.500 5h3l-3 3.500h3" stroke="#1d2321" strokeWidth="1.400" fill="none" />
          <path d="M15.500.8h3.500l-3.500 4H19" stroke="#fff" strokeWidth="1.300" fill="none" />
        </svg>
      </div>
    </footer>
  );
}

export default function App() {
  return (
    <div className={'flex h-[1079px] w-[1919px] flex-col overflow-hidden ' + ui}>
      <TabStrip />
      <Toolbar />
      <BookmarkBar />
      <ContactPage />
      <Taskbar />
    </div>
  );
}
